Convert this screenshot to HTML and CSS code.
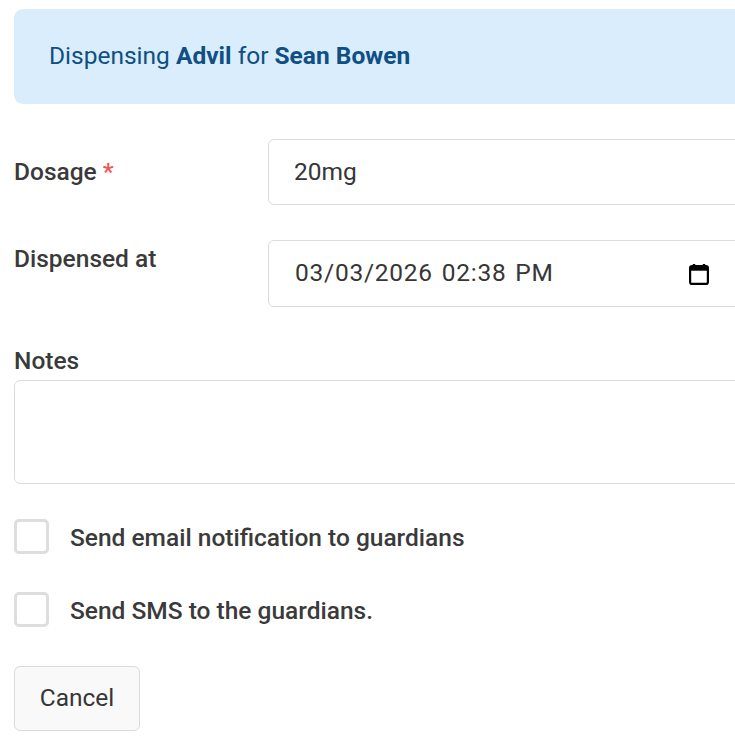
FILE: index.html
```html
<!DOCTYPE html>
<html lang="en">
<head>
  <meta charset="UTF-8" />
  <meta name="viewport" content="width=device-width, initial-scale=1.0" />
  <title>Dispense medication</title>
  <link rel="stylesheet" href="styles.css">
</head>
<body>
  <form class="page">
    <div class="notice"><span>Dispensing <strong>Advil</strong> for <strong>Sean Bowen</strong></span></div>

    <div class="row row-dosage">
      <label class="label" for="dosage">Dosage <span class="req">*</span></label>
      <input class="input" id="dosage" type="text" value="20mg" />
    </div>

    <div class="row row-date">
      <label class="label">Dispensed at</label>
      <div class="input date-input">
        <span class="date-value">03/03/2026 02:38 PM</span>
        <!-- calendar picker -->
        <svg class="cal" viewBox="0 0 20 22" xmlns="http://www.w3.org/2000/svg">
          <path d="M5 1v3M15 1v3" stroke="#000" stroke-width="2.4" fill="none"/>
          <rect x="1.1" y="3.1" width="17.8" height="17.8" rx="2" fill="none" stroke="#000" stroke-width="2.2"/>
          <rect x="1.1" y="3.1" width="17.8" height="4.6" fill="#000"/>
        </svg>
      </div>
    </div>

    <div class="notes">
      <label class="label" for="notes">Notes</label>
      <textarea class="input textarea" id="notes"></textarea>
    </div>

    <label class="check check-email"><input type="checkbox" /> <span>Send email notification to guardians</span></label>
    <label class="check check-sms"><input type="checkbox" /> <span>Send SMS to the guardians.</span></label>

    <button class="cancel" type="button">Cancel</button>
  </form>
</body>
</html>
```
FILE: styles.css
```css
html, body {
  margin: 0;
  padding: 0;
  height: 100%;
  overflow: hidden;
  background: #fff;
  color: #3a3a3a;
  font-family: Roboto, "Liberation Sans", sans-serif;
  font-size: 24.5px;
}

.page {
  width: 900px;
  padding: 9px 0 0 14px;
  box-sizing: border-box;
}

/* Info banner */
.notice {
  height: 95px;
  display: flex;
  align-items: center;
  padding: 0 0 2px 35px;
  box-sizing: border-box;
  background: #d9edfd;
  border-radius: 9px;
  color: #0f4f84;
}
.notice strong { font-weight: 700; }

.row {
  display: flex;
}
.row-dosage {
  margin-top: 35px;
  align-items: center;
}
.row-date {
  margin-top: 35px;
}

.label {
  display: block;
  width: 254px;
  flex: none;
  font-weight: 500;
  line-height: 36px;
}
.req { color: #f25555; }

.input {
  flex: 1;
  height: 66px;
  padding: 0 25px 1px;
  box-sizing: border-box;
  border: 1px solid #dbdbdb;
  border-radius: 6px;
  background: #fff;
  color: #363636;
  font: inherit;
  outline: none;
}

.row-date .label { margin-top: 1px; }

.date-input {
  display: flex;
  align-items: center;
  padding: 0 0 2px 26px;
  height: 67px;
}
.date-value {
  width: 394px;
  letter-spacing: 0.75px;
  word-spacing: 2px;
}
.cal {
  width: 20px;
  height: 22px;
  margin-top: 2px;
}

.notes { margin-top: 36px; }
.notes .label { width: auto; }
.textarea {
  display: block;
  width: 100%;
  height: 104px;
  margin-top: 1px;
  resize: none;
}

.check {
  display: flex;
  align-items: center;
  gap: 21px;
  font-weight: 500;
  height: 36px;
}
.check-email { margin-top: 35px; }
.check-sms { margin-top: 37px; }
.check input {
  appearance: none;
  width: 35px;
  height: 35px;
  margin: 0 0 2px;
  flex: none;
  border: 3px solid #dedede;
  border-radius: 5px;
  background: #fff;
}

.cancel {
  display: block;
  width: 126px;
  height: 65px;
  margin-top: 38px;
  padding: 0 0 2px;
  border: 1px solid #dbdbdb;
  border-radius: 6px;
  background: #f9f9f9;
  color: #363636;
  font: inherit;
}
```
